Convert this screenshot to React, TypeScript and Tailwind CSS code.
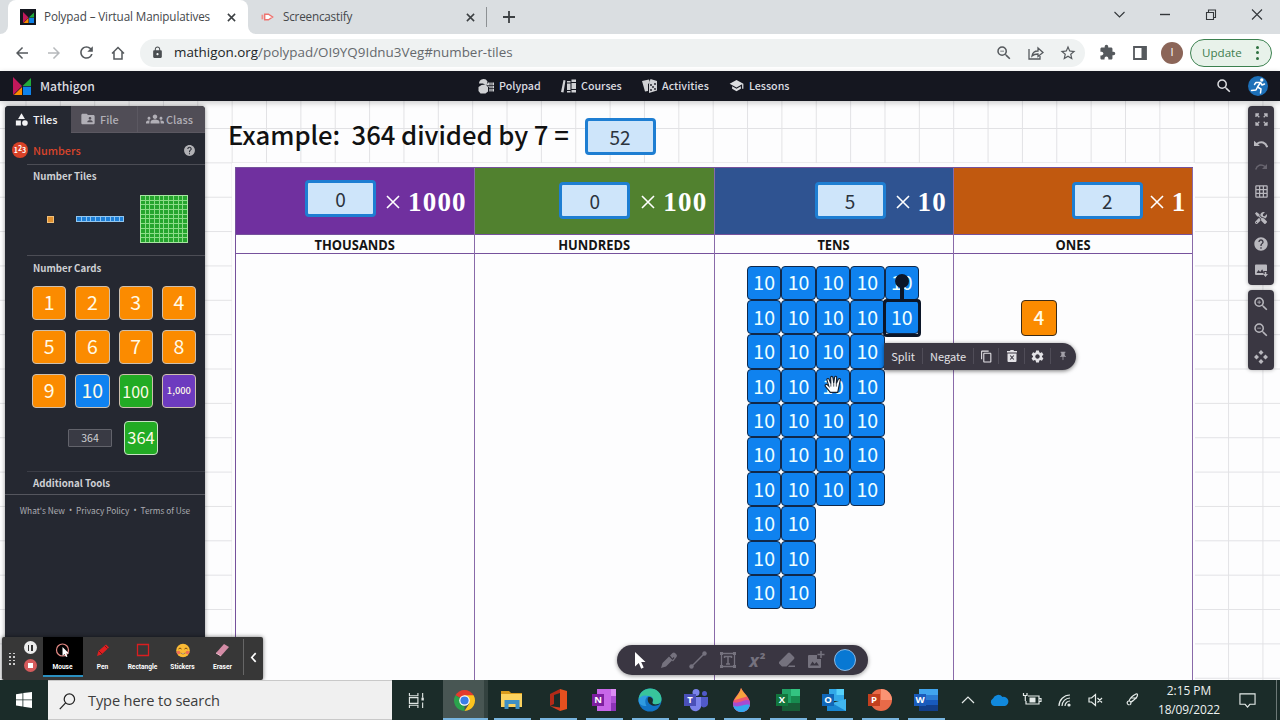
import type { ReactNode } from "react";
import {
  MdArrowBack,
  MdArrowForward,
  MdCategory,
  MdContentCopy,
  MdExtension,
  MdFolderShared,
  MdGridOn,
  MdGroups,
  MdHelp,
  MdLock,
  MdPushPin,
  MdRefresh,
  MdSchool,
  MdSearch,
  MdSettings,
  MdStarBorder,
  MdZoomIn,
  MdZoomOut,
} from "react-icons/md";
import { FaTools } from "react-icons/fa";

const columns = [
  { label: "THOUSANDS", factor: "1000", value: "0", bg: "bg-[#70309f]", box: "ml-[69px] mt-[12px]", gap: "ml-[10px]" },
  { label: "HUNDREDS", factor: "100", value: "0", bg: "bg-[#51812f]", box: "ml-[84px] mt-[14px]", gap: "ml-[11px]" },
  { label: "TENS", factor: "10", value: "5", bg: "bg-[#2f5391]", box: "ml-[100px] mt-[14px]", gap: "ml-[10px]" },
  { label: "ONES", factor: "1", value: "2", bg: "bg-[#c1590f]", box: "ml-[118px] mt-[14px]", gap: "ml-[7px]" },
];

const tileRows = [5, 5, 4, 4, 4, 4, 4, 2, 2, 2];

const cards = [
  ...["1", "2", "3", "4", "5", "6", "7", "8", "9"].map((n) => ({ n, cls: "bg-[#fb8b00] text-[19.500px] pb-[2px]" })),
  { n: "10", cls: "bg-[#0f82f0] text-[19.500px] pb-[2px]" },
  { n: "100", cls: "bg-[#22ab24] text-[16px] pb-px" },
  { n: "1,000", cls: "bg-[#6d3bbf] text-[9.400px] font-medium" },
];

function MathigonLogo({ className }: { className: string }) {
  return (
    <svg viewBox="0 0 18 18" className={className}>
      <path d="M0 0L9 9L0 18Z" fill="#c2185b" />
      <path d="M18 1V9H9.5Z" fill="#22ab3a" />
      <path d="M9 10V18H0.8Z" fill="#fb8b00" />
      <path d="M10 9.7h8V18h-8z" fill="#0f82e8" />
    </svg>
  );
}

function Cross() {
  return (
    <svg viewBox="0 0 10 10" className="size-[9px] ml-auto">
      <path d="M1 1l8 8M9 1l-8 8" stroke="#3c4043" strokeWidth="1.7" />
    </svg>
  );
}

function TabStrip() {
  return (
    <div className="h-[34px] bg-[#dadee1] flex text-[11.700px] text-[#45484b]">
      <div className="w-2 bg-white">
        <div className="h-full bg-[#dadee1] rounded-br-lg" />
      </div>
      <div className="w-[240px] bg-white rounded-t-lg flex items-center pl-3 pr-[12px]">
        <div className="size-4 bg-[#15171f] flex items-center justify-center">
          <MathigonLogo className="size-[11px]" />
        </div>
        <span className="ml-2 tracking-[-0.130px] whitespace-nowrap">Polypad – Virtual Manipulatives</span>
        <Cross />
      </div>
      <div className="w-2 bg-white">
        <div className="h-full bg-[#dadee1] rounded-bl-lg" />
      </div>
      <div className="w-[219px] flex items-center pl-[5px]">
        <svg viewBox="0 0 14 12" className="w-[13px] h-3">
          <path d="M0.500 3.500h2v5h-2z" fill="#f0908c" />
          <path d="M4 3h4l4.500 3L8 9H4z" fill="#fff" stroke="#ee7470" strokeWidth="1.500" />
        </svg>
        <span className="ml-[9px] tracking-[-0.200px]">Screencastify</span>
        <Cross />
      </div>
      <div className="flex items-center">
        <div className="ml-[11px] h-5 w-px bg-[#8d9194]" />
        <svg viewBox="0 0 12 12" className="size-3 ml-4">
          <path d="M6 0v12M0 6h12" stroke="#3c4043" strokeWidth="1.8" />
        </svg>
      </div>
      <svg viewBox="0 0 180 34" className="ml-auto w-[180px] h-[34px]" fill="none" stroke="#33373a" strokeWidth="1.1">
        <path d="M14.500 12l5 5 5-5" />
        <path d="M60 14.500h10" strokeWidth="1.4" />
        <path d="M106.500 12.500h7v7h-7zM108.500 12.500v-2.500h7v7.500h-2" />
        <path d="M152 9.500l10 10M162 9.500l-10 10" />
      </svg>
    </div>
  );
}

function AddressBar() {
  return (
    <div className="h-[37px] bg-white flex items-center text-[#55595d]">
      <div className="flex items-center gap-[14px] pl-[13px] w-[140px] shrink-0">
        <MdArrowBack className="size-[18px]" />
        <MdArrowForward className="size-[18px] text-[#b6b9bc]" />
        <MdRefresh className="size-[19px]" />
        <svg viewBox="0 0 14 14" className="size-[14px] ml-px" fill="none" stroke="#55595d" strokeWidth="1.5">
          <path d="M1 7.500L7 1.500l6 6M3 6v7h8V6" />
        </svg>
      </div>
      <div className="flex-1 h-7 rounded-full bg-[#eff2f2] flex items-center pl-[11px] pr-[8px]">
        <MdLock className="size-[13px] text-[#4a4e51]" />
        <span className="ml-[10px] text-[13.400px] text-[#65696d] whitespace-nowrap">
          <span className="text-[#222527]">mathigon.org</span>/polypad/OI9YQ9Idnu3Veg#number-tiles
        </span>
        <div className="ml-auto flex items-center gap-[15px]">
          <MdZoomOut className="size-[18px]" />
          <svg viewBox="0 0 16 14" className="w-4 h-[14px]" fill="none" stroke="#55595d" strokeWidth="1.3">
            <path d="M1 3v10h11v-3M4 10c0.500-3.500 2.500-5 6-5V2l5 4.500-5 4V8c-3 0-4.500 0.500-6 2z" />
          </svg>
          <MdStarBorder className="size-[18px]" />
        </div>
      </div>
      <div className="flex items-center w-[195px] pl-[14px] shrink-0">
        <MdExtension className="size-[17px]" />
        <svg viewBox="0 0 14 14" className="size-[14px] ml-[17px]">
          <path d="M1 1h12v12H1z" fill="none" stroke="#55595d" strokeWidth="1.8" />
          <path d="M8.500 1H13v12H8.500z" fill="#55595d" />
        </svg>
        <div className="size-[22px] rounded-full bg-[#8b6558] text-white text-[11px] flex items-center justify-center ml-[14px]">I</div>
        <div className="ml-[7px] h-7 w-[82px] rounded-full border border-[#3c8150] bg-[#e8f2ea] text-[#3d7c4d] text-[11.600px] flex items-center pl-[11px]">
          Update
          <div className="ml-auto mr-[12px] flex flex-col gap-[2.500px]">
            <i className="size-[3px] rounded-full bg-[#2e7040]" />
            <i className="size-[3px] rounded-full bg-[#2e7040]" />
            <i className="size-[3px] rounded-full bg-[#2e7040]" />
          </div>
        </div>
      </div>
    </div>
  );
}

function SiteHeader() {
  return (
    <div className="h-[30px] bg-[#151720] text-[#dcdde0] flex items-center pb-px font-['Noto_Sans_CJK_SC',sans-serif] text-[10.700px] font-medium leading-4 shadow-[0_2px_6px_#0003] relative">
      <div className="w-[478px] flex items-center pl-[13px]">
        <MathigonLogo className="size-[18px]" />
        <span className="ml-[9px] text-[12.200px] leading-4">Mathigon</span>
      </div>
      <div className="w-[83px] flex items-center gap-[5px]">
        <svg viewBox="0 0 16 16" className="size-4" fill="#d0d1d4">
          <path d="M1 5.500A4.500 4.500 0 0 1 9.500 3.500L8.500 7.500 5 5.500z" />
          <path d="M3.500 7l4-0.500L10 9v4.500L7.500 15.500h-5L0.500 13V9z" />
          <path d="M10 4.500h6v9h-5V9L8.500 7z" />
          <path d="M12 4v10M14 4v10M9 7.500h7M10 10.500h6" stroke="#151720" strokeWidth="0.7" />
        </svg>
        Polypad
      </div>
      <div className="w-[81px] flex items-center gap-[4px]">
        <svg viewBox="0 0 16 16" className="size-4" fill="#d0d1d4">
          <path d="M2.500 2l2 0.500-2 12-2.500-0.500zM6 3h3.500v1.500H6zM6 5.500h3.500V12H6zM6 13h3.500v1.500H6zM10.500 1.500H15V4h-4.500zM10.500 5H15v6h-4.500zM10.500 12H15v2.500h-4.500z" />
        </svg>
        Courses
      </div>
      <div className="w-[87px] flex items-center gap-[4px]">
        <svg viewBox="0 0 16 16" className="size-4" fill="#d0d1d4">
          <path d="M0 3l7-1.500 1 3L6 6v7l-3 0.500z" />
          <path d="M8.500 1l6.500 2v9.500l-8 2.500V6z" />
          <g fill="#151720"><circle cx="9" cy="7" r="0.900" /><circle cx="13" cy="6" r="0.900" /><circle cx="9" cy="12" r="0.900" /><circle cx="13" cy="11" r="0.900" /><circle cx="11" cy="9" r="0.900" /></g>
        </svg>
        Activities
      </div>
      <div className="flex items-center gap-[5px]">
        <MdSchool className="size-[15px]" />
        Lessons
      </div>
      <MdSearch className="size-[18px] ml-auto" />
      <svg viewBox="0 0 20 20" className="size-5 ml-[15px] mr-[12px]">
        <circle cx="10" cy="10" r="10" fill="#1d70b8" />
        <g fill="none" stroke="#fff" strokeWidth="1.500" strokeLinejoin="round" strokeLinecap="round">
          <path d="M12.500 6.500L9.500 11l3.500 2-0.500 4M9.500 11L8 14l-4.500 0.500M12.500 6.500L8 6.500 6.500 8.500M12.500 6.500l1.500 2.500 2.500-1" />
        </g>
        <circle cx="13.800" cy="4" r="1.700" fill="#fff" />
      </svg>
    </div>
  );
}

function Sidebar() {
  return (
    <div className="absolute left-[5px] top-[5px] w-[200px] h-[580px] bg-[#252831] rounded-t-[4px] overflow-hidden text-[#cfd0d4] shadow-[0_0_4px_#0006]">
      <div className="flex h-[27px] bg-[#504d56] text-[10.900px] leading-4 text-[#b1afb6] font-medium">
        <div className="w-[66px] bg-[#252831] text-[#f2f2f4] flex items-center pl-[9px] pb-px">
          <MdCategory className="size-[15px] mr-[4px]" />Tiles
        </div>
        <div className="w-[67px] flex items-center pl-[9px] border-r border-b border-[#5b5861]">
          <MdFolderShared className="size-4 mr-[4px]" />File
        </div>
        <div className="flex-1 flex items-center pl-[8px] border-b border-[#5b5861]">
          <MdGroups className="size-[18px] mr-[2px]" />Class
        </div>
      </div>
      <div className="h-[31px] flex items-center pl-[7px] pr-[9px] pt-[3px]">
        <div className="size-4 rounded-full bg-[#d94228] text-white text-[7px] font-bold flex items-center justify-center">
          1<span className="-mt-1">2</span>3
        </div>
        <span className="ml-[5px] text-[10.900px] leading-4 font-medium text-[#d8442b]">Numbers</span>
        <MdHelp className="size-[13px] ml-auto text-[#b1b1b5]" />
      </div>
      <div className="ml-[22px] border-t border-[#4c4d55] h-[91px] pl-[5px]">
        <div className="text-[9.700px] font-bold leading-4 pt-[3px] pl-px">Number Tiles</div>
        <div className="flex items-center mt-[11px] pl-[16px]">
          <div className="size-[5px] bg-[#e09030] border border-[#f2c078] box-content -ml-px" />
          <div className="ml-[22px] w-12 h-[6px] bg-[#1e7fd6] border border-[#8fc6f2] bg-[repeating-linear-gradient(90deg,transparent_0_3.800px,#8fc6f2_3.800px_4.800px)]" />
          <div className="ml-[16px] size-[48px] bg-[#25a52d] border border-[#a5e6a0] bg-[repeating-linear-gradient(90deg,transparent_0_3.700px,#8bdc87_3.700px_4.700px),repeating-linear-gradient(0deg,transparent_0_3.700px,#8bdc87_3.700px_4.700px)]" />
        </div>
      </div>
      <div className="ml-[22px] border-t border-[#4c4d55] h-[216px] pl-[5px]">
        <div className="text-[9.700px] font-bold leading-4 pt-[4px] pl-px">Number Cards</div>
        <div className="grid grid-cols-4 gap-x-[9px] gap-y-[10px] w-[164px] mt-[10px]">
          {cards.map((c) => (
            <div key={c.n} className={`h-[34px] rounded-[4px] border border-[#cdbfae] text-[#fffae6] flex items-center justify-center leading-none ${c.cls}`}>
              {c.n}
            </div>
          ))}
        </div>
        <div className="flex items-center mt-[13px] pl-[36px]">
          <div className="w-[44px] h-[18px] bg-[#393a44] border border-[#62636b] text-[10.500px] leading-none flex items-center justify-center rounded-[1px]">364</div>
          <div className="ml-[12px] size-[34px] rounded-[4px] border border-[#c7e2c4] bg-[#22ab24] text-[#fffae6] text-[16.500px] leading-none pb-px flex items-center justify-center">364</div>
        </div>
      </div>
      <div className="ml-[22px] pl-[6px] border-t border-[#3b3d46] text-[9.700px] font-bold leading-[22px] h-[23px]">Additional Tools</div>
      <div className="border-t border-[#55565e] flex justify-center pt-[7px] gap-[4px] text-[8.300px] leading-4 text-[#abacb1] whitespace-nowrap">
        <span>What's New</span>
        <span className="font-['Noto_Sans',sans-serif]">•</span>
        <span>Privacy Policy</span>
        <span className="font-['Noto_Sans',sans-serif]">•</span>
        <span>Terms of Use</span>
      </div>
    </div>
  );
}

function AnswerBox({ value }: { value: string }) {
  return (
    <div className="w-[71px] h-[37px] shrink-0 rounded-[4px] border-[3px] border-[#1e7ed2] bg-[#cee5fa] text-[#2b333d] text-[19px] leading-none pb-px flex items-center justify-center">
      {value}
    </div>
  );
}

function PlaceValueTable() {
  return (
    <div className="absolute left-[232px] top-[62px] w-[963px] h-[517px] bg-[#fdfdfe] pl-[3px] pr-[2px] pt-[4px]">
      <div className="grid grid-cols-4 h-full border-t border-l border-[#76529c]">
        {columns.map((col) => (
          <div key={col.label} className="flex flex-col border-r border-[#896aa9]">
            <div className={`h-[66px] flex items-start ${col.bg}`}>
              <div className={col.box}>
                <AnswerBox value={col.value} />
              </div>
              <div className={`mt-[20px] flex items-center text-white h-7 ${col.gap}`}>
                <svg viewBox="0 0 14 14" className="size-[14px]">
                  <path d="M1 1l12 12M13 1L1 13" stroke="#fff" strokeWidth="1.600" />
                </svg>
                <span className="ml-[8px] text-[27px] tracking-[1.200px] font-bold font-['Liberation_Serif',serif] leading-7">{col.factor}</span>
              </div>
            </div>
            <div className="h-5 border-y border-[#76529c] text-center font-bold text-[14px] leading-[19px] text-[#141414] font-['Open_Sans',sans-serif]">
              <span className="inline-block scale-x-[0.920]">{col.label}</span>
            </div>
          </div>
        ))}
      </div>
    </div>
  );
}

function TenTiles() {
  return (
    <div className="absolute left-[747px] top-[164.500px] text-[19.500px] leading-none text-[#edffff]">
      {tileRows.map((count, r) => (
        <div key={r} className="flex">
          {Array.from({ length: count }, (_, c) => (
            <div key={c} className="size-[34.400px] rounded-[4px] border border-[#10284a] bg-[#0f82ef] flex items-center justify-center pb-px">
              10
            </div>
          ))}
        </div>
      ))}
    </div>
  );
}

function Selection() {
  return (
    <div className="absolute left-[883px] top-[173px] w-[38px] flex flex-col items-center">
      <div className="size-[14px] rounded-full bg-[#0b1629]" />
      <div className="w-[4px] h-[12px] -mt-px bg-[#0b1629]" />
      <div className="w-[38px] h-[38px] rounded-[4px] border-[3.500px] border-[#0b1629]" />
    </div>
  );
}

function HandCursor() {
  return (
    <svg viewBox="0 0 18 18" className="absolute left-[824px] top-[274px] size-[19px]">
      <path d="M6 16.500L1.500 11c-1.200-1.600 0.500-2.800 1.800-1.600L4.500 10.500 2.800 4.800c-0.300-1.600 1.500-2 2-0.700L6.500 8 6.300 2.500c0-1.600 2-1.600 2.200 0L9.200 7.500 10 2.200c0.400-1.500 2.200-1.200 2 0.300L11.700 8l1.800-4c0.700-1.300 2.300-0.600 1.900 0.800L14 11.500l-1 5z" fill="#fff" stroke="#142030" strokeWidth="1.100" />
      <path d="M6.500 8v3M9.200 7.500v3.500M11.700 8v3" stroke="#142030" strokeWidth="0.700" />
    </svg>
  );
}

function TileMenu() {
  return (
    <div className="absolute left-[884px] top-[242px] w-[192px] h-[27px] rounded-r-full bg-[#3a3742] shadow-[0_1px_4px_#0008] text-[#e3e2e6] text-[11px] leading-4 flex items-center pb-px [&>*]:h-4 [&>*]:flex [&>*]:items-center [&>*]:justify-center [&>*+*]:border-l [&>*+*]:border-[#504d58]">
      <span className="w-[38px]">Split</span>
      <span className="w-[51px]">Negate</span>
      <span className="w-[25px]"><MdContentCopy className="size-[13px]" /></span>
      <span className="w-[26px]">
        <svg viewBox="0 0 10 12" className="w-[10px] h-3">
          <path d="M0 1h3l0.500-1h3L7 1h3v1.500H0zM0.500 3.500h9V11q0 1-1 1h-7q-1 0-1-1z" fill="#e3e2e6" />
          <path d="M3.200 5.500l3.600 4M6.800 5.500l-3.600 4" stroke="#3a3742" strokeWidth="1.100" />
        </svg>
      </span>
      <span className="w-[26px]"><MdSettings className="size-[15px]" /></span>
      <span className="w-[24px]"><MdPushPin className="size-[10px] text-[#a3a1a9]" /></span>
    </div>
  );
}

function SideTools() {
  const cell = "h-[25px] flex items-center justify-center";
  return (
    <div className="absolute left-[1248px] top-[5px] w-[26px] text-[#b9b8be] flex flex-col gap-[5px]">
      <div className="bg-[#3a3742] rounded-[4px] h-[179px] flex flex-col py-[1px] shadow-[0_0_4px_#0005]">
        <div className={cell}>
          <svg viewBox="0 0 13 13" className="size-[13px]" fill="none" stroke="currentColor" strokeWidth="1.300">
            <path d="M1 4V1h3M1.300 1.300L4.300 4.300M9 1H12v3M11.700 1.300L8.700 4.300M1 9V12h3M1.300 11.700L4.300 8.700M12 9V12H9M11.700 11.700L8.700 8.700" />
          </svg>
        </div>
        <div className={cell}>
          <svg viewBox="0 0 13 8" className="w-[14px] h-[9px]">
            <path d="M0 0.500v5h5.500z" fill="currentColor" />
            <path d="M2.500 3.500C6.500 0.500 11 2 12.300 6.500" fill="none" stroke="currentColor" strokeWidth="1.900" />
          </svg>
        </div>
        <div className="h-[20px] flex items-center justify-center text-[#68656f]">
          <svg viewBox="0 0 13 8" className="w-[13px] h-2 -scale-x-100">
            <path d="M1 1v5h5z" fill="currentColor" />
            <path d="M3 3.500C7 0.500 11 2 12.300 6.500" fill="none" stroke="currentColor" strokeWidth="1.500" />
          </svg>
        </div>
        <div className="h-[28px] flex items-center justify-center"><MdGridOn className="size-[15px]" /></div>
        <div className={cell}><FaTools className="size-3" /></div>
        <div className="h-[28px] flex items-center justify-center"><MdHelp className="size-4" /></div>
        <div className={cell}>
          <svg viewBox="0 0 13 13" className="size-[13px]" fill="currentColor">
            <path d="M1 0.500h10q1 0 1 1V7H8.500v4H1q-1 0-1-1V1.500q0-1 1-1z" />
            <path d="M9.700 8h1.600v2H13l-2.500 3L8 10h1.700z" />
            <path d="M1.500 9l2-3 1.700 2 2-2.700L9 9z" fill="#3a3742" />
          </svg>
        </div>
      </div>
      <div className="bg-[#3a3742] rounded-[4px] h-[80px] flex flex-col shadow-[0_0_4px_#0005]">
        <div className="h-[27px] flex items-center justify-center"><MdZoomIn className="size-[18px]" /></div>
        <div className="h-[26px] flex items-center justify-center"><MdZoomOut className="size-[18px]" /></div>
        <div className="h-[27px] flex items-center justify-center">
          <svg viewBox="0 0 14 14" className="size-[14px]" fill="currentColor">
            <path d="M7 0l2.500 2.500L7 5 4.500 2.500zM7 9l2.500 2.500L7 14l-2.500-2.500zM2.500 4.500L5 7 2.500 9.500 0 7zM11.500 4.500L14 7l-2.500 2.500L9 7z" />
          </svg>
        </div>
      </div>
    </div>
  );
}

function DrawToolbar() {
  return (
    <div className="absolute left-[617px] top-[544px] w-[251px] h-[30px] rounded-full bg-[#3a3642] shadow-[0_1px_4px_#0006] flex items-center text-[#75727e] pl-[8px] pr-[8px] [&>*]:w-[29.400px] [&>*]:shrink-0 [&>*]:flex [&>*]:justify-center">
      <span>
        <svg viewBox="0 0 12 17" className="w-3 h-[17px]"><path d="M1 0l10.500 10H7.200l2.500 5.500-2.500 1.200L4.800 11 1 14.500z" fill="#fff" /></svg>
      </span>
      <span>
        <svg viewBox="0 0 18 18" className="size-[18px]" fill="currentColor"><path d="M1 17l1.500-5 6.500-6.500 3.500 3.500-6.500 6.500zM10 4.500l2.500-2.500q1.500-1 2.500 0l1.500 1.500q1 1 0 2.500L13 10.500l-1-1L14.500 7l-1-1-1 1.500z" /></svg>
      </span>
      <span>
        <svg viewBox="0 0 18 18" className="size-[18px]" fill="currentColor"><path d="M3 15L15 3" stroke="currentColor" strokeWidth="1.500" /><circle cx="2.500" cy="15.500" r="2.200" /><circle cx="15.500" cy="2.500" r="2.200" /></svg>
      </span>
      <span>
        <svg viewBox="0 0 18 18" className="size-[18px]" fill="none" stroke="currentColor" strokeWidth="1.300">
          <path d="M2.500 2.500h13v13h-13z" /><path d="M5.500 7V5.500h7V7M9 5.500v7.500M7 13h4" strokeWidth="1.500" />
          <path d="M1 1h3v3H1zM14 1h3v3h-3zM1 14h3v3H1zM14 14h3v3h-3z" fill="currentColor" stroke="none" />
        </svg>
      </span>
      <span className="text-[18px] leading-[18px] font-bold font-['Open_Sans',sans-serif]">
        <em>x</em>
        <b className="text-[9.500px] leading-[10px] ml-px">2</b>
      </span>
      <span>
        <svg viewBox="0 0 18 18" className="size-[18px]" fill="currentColor"><path d="M1 11L10 2q1-1 2 0l4 4q1 1 0 2l-7.500 7.500H4L1 12.500zM11 14.500h6V16h-7z" /></svg>
      </span>
      <span>
        <svg viewBox="0 0 18 18" className="size-[18px]" fill="currentColor">
          <path d="M2 4h8v4h4v8q0 1-1 1H2q-1 0-1-1V5q0-1 1-1z" /><path d="M3 14.500l2.500-4 2 2.500 2-2 2.500 3.500z" fill="#3a3642" />
          <path d="M14 0v7M10.500 3.500h7" stroke="currentColor" strokeWidth="1.500" />
        </svg>
      </span>
      <span><i className="size-[22px] rounded-full bg-[#0878d3] border border-[#8bb9e4]" /></span>
    </div>
  );
}

function RecorderTool({ label, active, children }: { label: string; active?: boolean; children: ReactNode }) {
  return (
    <div className={`w-10 h-10 flex flex-col items-center pt-[5px] ${active ? "bg-black border-b-2 border-[#2a8fc0]" : ""}`}>
      <svg viewBox="0 0 16 16" className="size-4" fill="none">{children}</svg>
      <span className="text-[6.600px] leading-3 font-bold text-white mt-[3px] font-['Roboto',sans-serif]">{label}</span>
    </div>
  );
}

function Recorder() {
  return (
    <div className="absolute left-[2px] top-[536px] w-[261px] h-[43px] rounded-[2px] bg-[#373737] shadow-[0_0_4px_#0008] flex">
      <div className="grid grid-cols-2 gap-[2px] content-center ml-[7px] w-[6px]">
        {Array.from({ length: 8 }, (_, i) => <i key={i} className="size-[1.500px] bg-[#ccc]" />)}
      </div>
      <div className="w-7 flex flex-col items-center pt-[4px] gap-[5px] ml-px">
        <div className="size-[13px] rounded-full bg-[#ececec] flex items-center justify-center gap-[2px]">
          <i className="w-[1.500px] h-[6px] bg-[#333]" /><i className="w-[1.500px] h-[6px] bg-[#333]" />
        </div>
        <div className="size-[13px] rounded-full bg-[#d55b5c] flex items-center justify-center">
          <i className="size-[5px] bg-white" />
        </div>
      </div>
      <div className="flex -ml-[1.500px]">
        <RecorderTool label="Mouse" active>
          <circle cx="7.500" cy="8" r="6" stroke="#e48a85" strokeWidth="1.200" />
          <path d="M7.500 5l6.500 6.500h-3l1.500 3-1.500 0.500-1.500-3-2 2z" fill="#fff" />
        </RecorderTool>
        <RecorderTool label="Pen">
          <path d="M2 14l1.500-5L11 2.500l3 3L6.500 12.500z" fill="#e01e20" /><path d="M4 9l3 3M10 4l2.500 2.500" stroke="#5d1010" strokeWidth="0.800" />
        </RecorderTool>
        <RecorderTool label="Rectangle"><path d="M2.500 2.500h11v11h-11z" stroke="#d91e20" strokeWidth="1.300" /></RecorderTool>
        <RecorderTool label="Stickers">
          <circle cx="8" cy="8.500" r="6.800" fill="#fbbb35" />
          <path d="M3.500 7q1.500-2 3 0M9.500 7q1.500-2 3 0" stroke="#7c4b13" />
          <path d="M5.500 11q2.500 2 5 0" fill="#fff" stroke="#7c4b13" strokeWidth="0.700" />
          <circle cx="3.500" cy="10.500" r="1.800" fill="#ee6e56" /><circle cx="12.500" cy="10.500" r="1.800" fill="#ee6e56" />
        </RecorderTool>
        <RecorderTool label="Eraser"><path d="M1 11L9 2l5 3L6 14z" fill="#d48ca6" /><path d="M1 11l5 3" stroke="#efbccc" /></RecorderTool>
      </div>
      <div className="w-px h-9 mt-[2px] bg-[#666]" />
      <svg viewBox="0 0 8 12" className="w-[7px] h-[11px] mt-[15px] ml-[6px]"><path d="M6.500 1L2 6l4.500 5" fill="none" stroke="#fff" strokeWidth="1.900" /></svg>
    </div>
  );
}

function Workspace() {
  return (
    <div className="relative h-[579px] overflow-hidden bg-[#fdfdfe] font-['Noto_Sans_CJK_SC',sans-serif] bg-[linear-gradient(90deg,#e2e2e5_1px,transparent_1px),linear-gradient(#e2e2e5_1px,transparent_1px)] bg-size-[34.370px_34.370px] bg-position-[25.500px_27px]">
      <div className="absolute left-[228px] top-[14px] text-[25.700px] leading-[38px] tracking-[-0.060px] font-medium text-[#111] whitespace-pre">
        Example:  364 divided by 7 =
      </div>
      <div className="absolute left-[584.500px] top-[17px]"><AnswerBox value="52" /></div>
      <PlaceValueTable />
      <TenTiles />
      <Selection />
      <div className="absolute left-[1021px] top-[198.500px] size-[36px] rounded-[4px] border-[1.500px] border-[#3a2b18] bg-[#fb8b00] text-[#fffae6] text-[19px] font-medium leading-none pb-[2px] flex items-center justify-center">4</div>
      <HandCursor />
      <TileMenu />
      <SideTools />
      <DrawToolbar />
      <Sidebar />
      <Recorder />
    </div>
  );
}

function OfficeIcon({ letter, tile, children }: { letter: string; tile: string; children: ReactNode }) {
  return (
    <svg viewBox="0 0 24 24" className="size-6">
      {children}
      <path d="M0 6h12v12H0z" fill={tile} />
      <text x="6" y="15.300" textAnchor="middle" fontSize="9.500" fontWeight="700" fill="#fff" className="font-['Open_Sans',sans-serif]">{letter}</text>
    </svg>
  );
}

const taskbarApps: { name: string; icon: ReactNode }[] = [
  {
    name: "explorer",
    icon: (
      <svg viewBox="0 0 24 24" className="size-6">
        <path d="M1 3h8l2 2h11v5H1z" fill="#d99b1d" /><path d="M1 6h21v13H1z" fill="#fbd25f" />
        <path d="M4.500 12h15v9h-4v-5h-7v5h-4z" fill="#3f90c5" />
      </svg>
    ),
  },
  {
    name: "office",
    icon: (
      <svg viewBox="0 0 24 24" className="size-6">
        <path d="M14 1l7 2v18l-7 2z" fill="#e8501f" /><path d="M14 1v4L8 7v9l-4 2V6z" fill="#b42a18" />
        <path d="M4 18l10 1.500V23z" fill="#d23b1f" />
      </svg>
    ),
  },
  {
    name: "onenote",
    icon: (
      <OfficeIcon letter="N" tile="#7d1fa0">
        <path d="M5 1h19v22H5z" fill="#c867e8" /><path d="M19 1h5v7h-5z" fill="#dc8df4" /><path d="M19 8h5v7h-5z" fill="#ad4fd3" /><path d="M19 15h5v8h-5z" fill="#8d33b8" />
      </OfficeIcon>
    ),
  },
  {
    name: "edge",
    icon: (
      <svg viewBox="0 0 24 24" className="size-6">
        <circle cx="12" cy="12" r="11.500" fill="#1273c4" />
        <path d="M0.500 12C1 4 7 0.500 12 0.500c7 0 11.500 5 11.500 10.500 0 4-3 5.500-6 5.500-2.500 0-4-1-3-2.500 2-3-0.500-6-4-6C6 8 2 9 0.500 12z" fill="#38c49b" />
        <path d="M0.500 12C2 8 6 6.500 10.500 8 7 10 6.500 14 8.500 18c-5 0-8-2-8-6z" fill="#2f9be0" />
        <path d="M10.500 9c3-0.500 5.500 2 4 5-1 2.500 4 3.500 8 1-1.500 2.500-7 4-10 1.500C9.500 14.500 9 10.500 10.500 9z" fill="#1b2c29" />
      </svg>
    ),
  },
  {
    name: "teams",
    icon: (
      <OfficeIcon letter="T" tile="#4a50b8">
        <circle cx="12" cy="4.500" r="3.500" fill="#7b83eb" /><circle cx="20.500" cy="5.500" r="2.500" fill="#5059c9" />
        <path d="M6 9h11v7a5.500 5.500 0 0 1-11 3z" fill="#7b83eb" /><path d="M17 9h7v6a4 4 0 0 1-7 3z" fill="#5059c9" />
      </OfficeIcon>
    ),
  },
  {
    name: "paint",
    icon: (
      <svg viewBox="0 0 24 24" className="size-6">
        <path d="M11 0c3 6 9 9 9 15.500C20 20.500 16 24 11.500 24S3 20.500 3 15.500C3 10 9 7 11 0z" fill="#f0566e" />
        <path d="M11 0c1.500 3.500 4 5.500 6 8.500L4.500 12C6.500 8 10 5 11 0z" fill="#f9a43d" />
        <path d="M3.200 14c5 3 11-4 16.300-1.500 2 6-2.500 11.500-8 11.500S2.500 19.500 3.200 14z" fill="#a64bd3" />
        <path d="M3.300 17.500c6 3 11-2.500 16.500-0.500C19 21.500 15.500 24 11.500 24S4 21.500 3.300 17.500z" fill="#35a9ee" />
      </svg>
    ),
  },
  {
    name: "excel",
    icon: (
      <OfficeIcon letter="X" tile="#12763d">
        <path d="M6 1h18v22H6z" fill="#21a366" /><path d="M15 1h9v7h-9z" fill="#33c481" /><path d="M15 8h9v7h-9z" fill="#178b4f" /><path d="M6 15h18v8H6z" fill="#185c37" />
      </OfficeIcon>
    ),
  },
  {
    name: "outlook",
    icon: (
      <OfficeIcon letter="O" tile="#1067b8">
        <path d="M7 1h15v12H7z" fill="#32a9e8" /><path d="M14.500 1H22v6h-7.500z" fill="#55d1fa" /><path d="M5 11l9.500 6 9.500-6v12H5z" fill="#1986d1" /><path d="M24 11v12L10 15z" fill="#41b6ee" />
      </OfficeIcon>
    ),
  },
  {
    name: "powerpoint",
    icon: (
      <OfficeIcon letter="P" tile="#c23f1e">
        <circle cx="13" cy="12" r="11" fill="#e86a48" /><path d="M13 1a11 11 0 0 1 11 11H13z" fill="#fa9373" />
      </OfficeIcon>
    ),
  },
  {
    name: "word",
    icon: (
      <OfficeIcon letter="W" tile="#1b5cbc">
        <path d="M5 1h19v6H5z" fill="#41a5ee" /><path d="M5 7h19v5H5z" fill="#2b7cd3" /><path d="M5 12h19v5H5z" fill="#185abd" /><path d="M5 17h19v6H5z" fill="#123f8b" />
      </OfficeIcon>
    ),
  },
];

function Taskbar() {
  return (
    <div className="h-10 bg-[#1b2c29] flex text-[#eef2f1] [&>*]:shrink-0">
      <div className="w-12 flex items-center justify-center">
        <svg viewBox="0 0 16 16" className="size-4" fill="#fff"><path d="M0 2.200l6.500-1V7.500H0zM7.300 1.100L16 0v7.500H7.300zM0 8.300h6.500v6.200l-6.500-0.900zM7.300 8.300H16V16l-8.700-1.300z" /></svg>
      </div>
      <div className="w-[344px] bg-[#f0f0f0] border-y border-[#c9c9c9] flex items-center pt-[2px] pl-[11px] text-[#3c3c3c]">
        <svg viewBox="0 0 18 18" className="size-[17px]" fill="none" stroke="#222" strokeWidth="1.300"><circle cx="11" cy="6.500" r="5.500" /><path d="M7 10.500L0.800 17" /></svg>
        <span className="ml-3 text-[14.600px] tracking-[-0.130px]">Type here to search</span>
      </div>
      <div className="w-[51px] flex items-center justify-center">
        <svg viewBox="0 0 18 18" className="size-[17px] -ml-[2px]" fill="none" stroke="#dfe5e3" strokeWidth="1.200"><path d="M1.500 1v3h9V1M1.500 17v-3h9v3M1.500 6h9v6h-9zM15.500 1v5M15.500 11v6" /><path d="M15.500 6v3" strokeWidth="2.500" /></svg>
      </div>
      <div className="w-[45px] flex flex-col">
        <div className="h-[38px] flex">
          <div className="w-[41px] bg-[#485653] flex items-center justify-center pl-[2px] pt-[2px]">
            <svg viewBox="0 0 24 24" className="size-[23px]">
              <path d="M12 12L2.500 6.500A11 11 0 0 1 21.500 6.500z" fill="#e33b2e" />
              <path d="M12 12V23A11 11 0 0 1 2.500 6.500z" fill="#2ba24c" />
              <path d="M12 6.500h9.500A11 11 0 0 1 12 23l5-8z" fill="#fcc31e" />
              <circle cx="12" cy="12" r="5.500" fill="#fff" /><circle cx="12" cy="12" r="4.300" fill="#3a7de8" />
            </svg>
          </div>
          <div className="w-[4px] bg-[#33423f]" />
        </div>
        <div className="h-[2px] bg-[#78b5df]" />
      </div>
      <div className="flex ml-[3px]">
        {taskbarApps.map((app) => (
          <div key={app.name} className="w-[46px] flex flex-col items-center pr-[4px]">
            <div className="h-[38px] flex items-center pt-[2px]">{app.icon}</div>
            <div className="h-[2px] w-[37px] bg-[#78b5df]" />
          </div>
        ))}
      </div>
      <div className="ml-auto flex items-center">
        <svg viewBox="0 0 198 24" className="w-[198px] h-6" fill="none" stroke="#e5ebe9" strokeWidth="1.200">
          <path d="M11 15l6-6 6 6" />
          <path d="M43 18a4 4 0 0 1-1-7.500 5.500 5.500 0 0 1 9.500-1.500 4.500 4.500 0 0 1 2.500 9z" fill="#1189dc" stroke="none" />
          <path d="M77 8h11v8H75v-3M88.500 10.500h1.500v3h-1.500M72.500 5v2.500h3.500V5M74.300 8v5" />
          <path d="M78.500 9.500h6v5h-6z" fill="#e5ebe9" stroke="none" />
          <path d="M108 18a11 11 0 0 1 11-11M111 18a8 8 0 0 1 8-8M114 18a5 5 0 0 1 5-5" /><circle cx="118" cy="17" r="1" fill="#e5ebe9" />
          <path d="M138 10h2.500l4-3.500v11l-4-3.500H138zM146.500 10l4.500 4.500M151 10l-4.500 4.500" />
          <path d="M178 17c-3-1-2-4 0-4s3 3 0.500 4M178 13c1-3 5-6 7-7s2 2 0 4-4 4-5.500 4M180 10h6" />
        </svg>
        <div className="w-[80px] text-center text-[11.900px] leading-[19px] whitespace-nowrap">
          <div>2:15 PM</div>
          <div className="tracking-[-0.100px]">18/09/2022</div>
        </div>
        <svg viewBox="0 0 18 18" className="size-[17px] ml-[10px] mr-[20px]" fill="none" stroke="#e5ebe9" strokeWidth="1.200"><path d="M1 2h16v11h-5.500L9 16l-2.500-3H1z" /></svg>
        <div className="w-px h-10 bg-[#6c7876] mr-[4px]" />
      </div>
    </div>
  );
}

export default function App() {
  return (
    <div className="w-[1280px] h-[720px] overflow-hidden font-['Open_Sans',sans-serif]">
      <TabStrip />
      <AddressBar />
      <div className="relative z-10"><SiteHeader /></div>
      <Workspace />
      <Taskbar />
    </div>
  );
}
